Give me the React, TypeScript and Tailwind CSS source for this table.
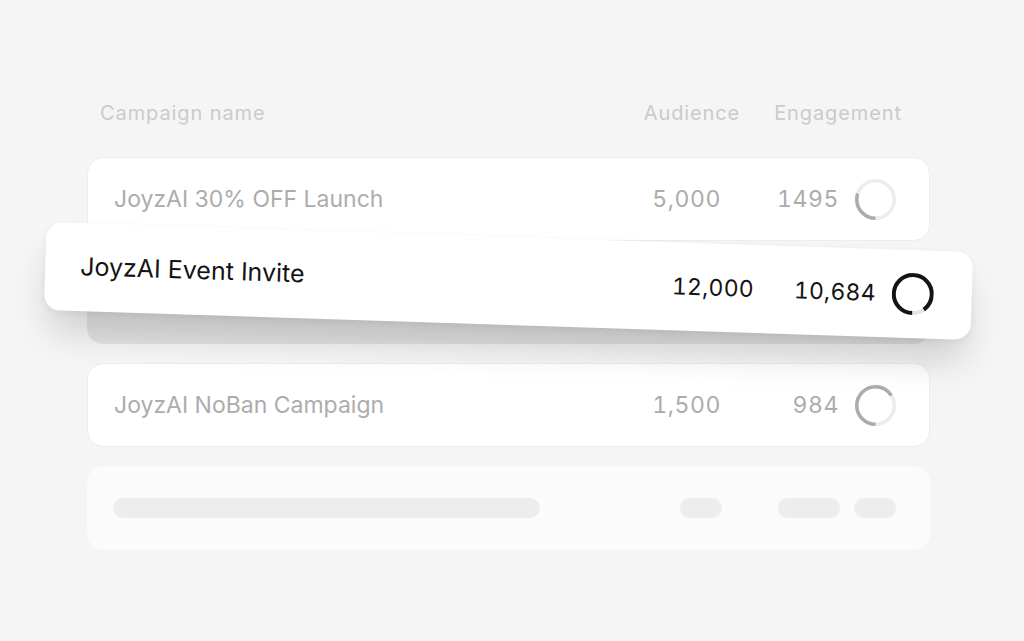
import React from 'react';

type Row = { name: string; audience: string; engaged: string; progress: number };

const rows: Row[] = [
  { name: 'JoyzAI 30% OFF Launch', audience: '5,000', engaged: '1495', progress: 1495 / 5000 },
  { name: 'JoyzAI Event Invite', audience: '12,000', engaged: '10,684', progress: 10684 / 12000 },
  { name: 'JoyzAI NoBan Campaign', audience: '1,500', engaged: '984', progress: 984 / 1500 },
];

function Ring({ progress, size, stroke, color, track }: { progress: number; size: number; stroke: number; color: string; track: string }) {
  const r = (size - stroke) / 2;
  const c = 2 * Math.PI * r;
  const mid = size / 2;
  return (
    <svg width={size} height={size} viewBox={`0 0 ${size} ${size}`} className="shrink-0">
      <circle cx={mid} cy={mid} r={r} fill="none" stroke={track} strokeWidth={stroke} />
      <circle
        cx={mid}
        cy={mid}
        r={r}
        fill="none"
        stroke={color}
        strokeWidth={stroke}
        strokeDasharray={`${progress * c} ${c}`}
        transform={`rotate(90 ${mid} ${mid})`}
      />
    </svg>
  );
}

function FadedRow({ row }: { row: Row }) {
  return (
    <div className="h-[84px] rounded-2xl bg-white border border-[#ededed] flex items-center pl-[26px] pr-[33px] text-[23px] text-[#acacac]">
      <span className="flex-1">{row.name}</span>
      <span className="tabular-nums tracking-[0.6px]">{row.audience}</span>
      <span className="w-[118px] text-right tabular-nums tracking-[0.6px]">{row.engaged}</span>
      <div className="ml-[16px]">
        <Ring progress={row.progress} size={41} stroke={3.5} color="#acacac" track="#ececec" />
      </div>
    </div>
  );
}

function LiftedRow({ row }: { row: Row }) {
  return (
    <div className="relative h-[84px] rounded-2xl bg-[#e2e2e2]">
      <div className="absolute z-10 -top-[2px] -bottom-[2px] -left-[42px] -right-[42px] -translate-y-[21px] rotate-[1.85deg] rounded-2xl bg-white shadow-[0_26px_36px_-6px_rgba(0,0,0,0.16),0_2px_6px_rgba(0,0,0,0.05)] flex items-center pl-[35px] pr-[38px] text-[23px] text-[#141414]">
        <span className="flex-1 text-[25px]">{row.name}</span>
        <span className="tabular-nums tracking-[0.2px]">{row.audience}</span>
        <span className="w-[122px] text-right tabular-nums tracking-[0.2px]">{row.engaged}</span>
        <div className="ml-[16px]">
          <Ring progress={row.progress} size={42} stroke={4} color="#141414" track="#e6e6e6" />
        </div>
      </div>
    </div>
  );
}

export default function App() {
  return (
    <div className="w-full h-[641px] bg-[#f5f5f5] font-['Inter',sans-serif] overflow-hidden">
      <div className="ml-[87px] w-[843px] pt-[100px]">
        <div className="h-[26px] flex items-center pl-[13px] pr-[28px] text-[20px] text-[#cbcbcb] tracking-[0.9px]">
          <span className="flex-1">Campaign name</span>
          <span>Audience</span>
          <span className="ml-[34px]">Engagement</span>
        </div>
        <div className="mt-[31px] flex flex-col gap-[19px]">
          <FadedRow row={rows[0]} />
          <LiftedRow row={rows[1]} />
          <FadedRow row={rows[2]} />
          <div className="h-[84px] rounded-2xl bg-[#fbfbfb] flex items-center pl-[26px] pr-[34px]">
            <div className="w-[427px] h-[20px] rounded-full bg-[#ededed]" />
            <div className="flex-1" />
            <div className="w-[42px] h-[20px] rounded-full bg-[#ededed]" />
            <div className="ml-[56px] w-[62px] h-[20px] rounded-full bg-[#ededed]" />
            <div className="ml-[14px] w-[42px] h-[20px] rounded-full bg-[#ededed]" />
          </div>
        </div>
      </div>
    </div>
  );
}
